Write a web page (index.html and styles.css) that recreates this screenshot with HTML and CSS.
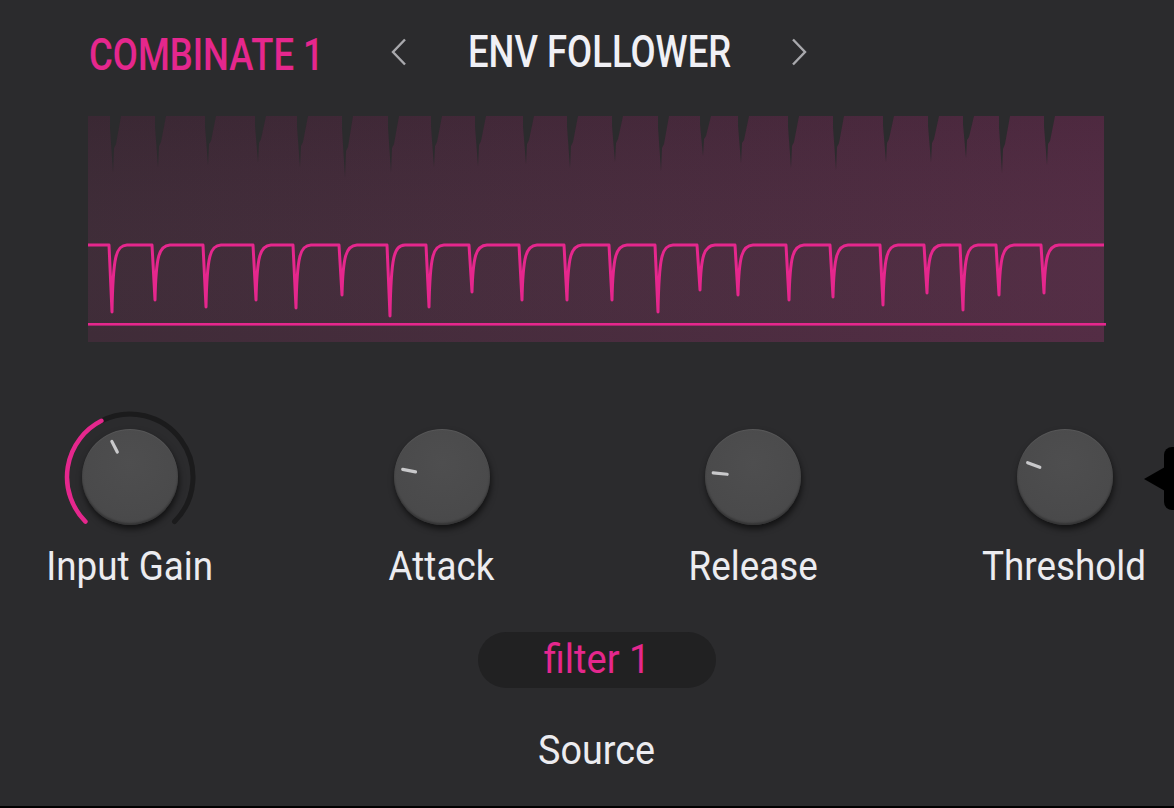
FILE: index.html
```html
<!DOCTYPE html>
<html lang="en">
<head>
<meta charset="utf-8">
<title>Env Follower</title>
<link rel="stylesheet" href="styles.css">
</head>
<body>
<div class="panel">
  <header class="header">
    <div class="title title-left"><span class="cond-l">COMBINATE 1</span></div>
    <svg class="chev chev-left" width="18" height="28" viewBox="0 0 18 28"><polyline points="15,1.5 3,14 15,26.5"/></svg>
    <div class="title title-main"><span class="cond-l">ENV FOLLOWER</span></div>
    <svg class="chev chev-right" width="18" height="28" viewBox="0 0 18 28"><polyline points="3,1.5 15,14 3,26.5"/></svg>
  </header>

  <svg class="display" width="1018" height="226" viewBox="0 0 1018 226">
    <defs>
      <linearGradient id="bg" x1="0" y1="0" x2="1" y2="0">
        <stop offset="0" stop-color="#3d2a36"/>
        <stop offset="1" stop-color="#522b43"/>
      </linearGradient>
      <linearGradient id="shade" x1="0" y1="0" x2="0" y2="1">
        <stop offset="0" stop-color="#000" stop-opacity="0.05"/>
        <stop offset="1" stop-color="#fff" stop-opacity="0.01"/>
      </linearGradient>
    </defs>
    <rect x="0" y="0" width="1016" height="226" fill="url(#bg)"/>
    <rect x="0" y="0" width="1016" height="226" fill="url(#shade)"/>
    <g fill="#2b2b2d">
      <polygon points="22,0 33,0 28,28 26,32 25,56 23.5,34 22,11"/>
      <polygon points="67,0 78,0 73,26 71,30 70,51 68.5,31 67,10"/>
      <polygon points="117,0 128,0 123,25 121,28 120,49 118.5,29 117,10"/>
      <polygon points="167,0 178,0 173,23 171,27 170,46 168.5,28 167,9"/>
      <polygon points="209,0 220,0 215,26 213,30 212,51 210.5,31 209,10"/>
      <polygon points="254,0 265,0 260,31 258,35 257,61 255.5,37 254,12"/>
      <polygon points="300,0 311,0 306,28 304,32 303,56 301.5,34 300,11"/>
      <polygon points="343,0 354,0 349,26 347,30 346,51 344.5,31 343,10"/>
      <polygon points="387,0 398,0 393,25 391,29 390,50 388.5,30 387,10"/>
      <polygon points="435,0 446,0 441,24 439,28 438,48 436.5,29 435,10"/>
      <polygon points="479,0 490,0 485,26 483,30 482,52 480.5,31 479,10"/>
      <polygon points="524,0 535,0 530,23 528,27 527,46 525.5,28 524,9"/>
      <polygon points="570,0 581,0 576,28 574,32 573,55 571.5,33 570,11"/>
      <polygon points="612,0 623,0 618,20 616,23 615,40 613.5,24 612,8"/>
      <polygon points="650,0 661,0 656,24 654,27 653,47 651.5,28 650,9"/>
      <polygon points="700,0 711,0 706,26 704,30 703,52 701.5,31 700,10"/>
      <polygon points="745,0 756,0 751,27 749,31 748,54 746.5,32 745,11"/>
      <polygon points="795,0 806,0 801,23 799,27 798,46 796.5,28 795,9"/>
      <polygon points="840,0 851,0 846,23 844,27 843,46 841.5,28 840,9"/>
      <polygon points="875,0 886,0 881,21 879,24 878,42 876.5,25 875,8"/>
      <polygon points="911,0 922,0 917,28 915,33 914,57 912.5,34 911,11"/>
      <polygon points="956,0 967,0 962,25 960,28 959,49 957.5,29 956,10"/>
    </g>
    <path class="env" d="M0,129 L21,129 L24,196 C25,140 28,129.5 39,129
      L64,129 L67,184 C68,140 71,129.5 82,129
      L115,129 L118,191 C119,140 122,129.5 133,129
      L165,129 L168,184 C169,140 172,129.5 183,129
      L205,129 L208,192 C209,140 212,129.5 223,129
      L251,129 L254,179 C255,140 258,129.5 269,129
      L299,129 L302,200 C303,140 306,129.5 317,129
      L338,129 L341,191 C342,140 345,129.5 356,129
      L381,129 L384,176 C385,140 388,129.5 399,129
      L431,129 L434,184 C435,140 438,129.5 449,129
      L476,129 L479,184 C480,140 483,129.5 494,129
      L521,129 L524,184 C525,140 528,129.5 539,129
      L567,129 L570,196 C571,140 574,129.5 585,129
      L609,129 L612,174 C613,140 616,129.5 627,129
      L647,129 L650,179 C651,140 654,129.5 665,129
      L698,129 L701,184 C702,140 705,129.5 716,129
      L742,129 L745,181 C746,140 749,129.5 760,129
      L792,129 L795,189 C796,140 799,129.5 810,129
      L836,129 L839,177 C840,140 843,129.5 854,129
      L872,129 L875,194 C876,140 879,129.5 890,129
      L908,129 L911,179 C912,140 915,129.5 926,129
      L953,129 L956,177 C957,140 960,129.5 971,129
      L1016,129"/>
    <rect x="0" y="207" width="1018" height="2.6" fill="#e5278d"/>
  </svg>

  <div class="knobs">
    <div class="ctrl">
      <div class="knob-wrap">
        <svg class="ring" width="136" height="136" viewBox="-68 -68 136 136">
          <path class="track" d="M-28.6,-56.13 A63,63 0 0 1 44.55,44.55"/>
          <path class="value" d="M-44.55,44.55 A63,63 0 0 1 -28.6,-56.13"/>
        </svg>
        <div class="knob"><svg width="96" height="96" viewBox="-48 -48 96 96"><line class="ind" x1="0" y1="-28" x2="0" y2="-40" transform="rotate(-27)"/></svg></div>
      </div>
      <div class="label"><span class="cond">Input Gain</span></div>
    </div>
    <div class="ctrl">
      <div class="knob-wrap">
        <div class="knob"><svg width="96" height="96" viewBox="-48 -48 96 96"><line class="ind" x1="0" y1="-27" x2="0" y2="-40" transform="rotate(-79)"/></svg></div>
      </div>
      <div class="label"><span class="cond">Attack</span></div>
    </div>
    <div class="ctrl">
      <div class="knob-wrap">
        <div class="knob"><svg width="96" height="96" viewBox="-48 -48 96 96"><line class="ind" x1="0" y1="-26" x2="0" y2="-40" transform="rotate(-84)"/></svg></div>
      </div>
      <div class="label"><span class="cond">Release</span></div>
    </div>
    <div class="ctrl">
      <div class="knob-wrap">
        <div class="knob"><svg width="96" height="96" viewBox="-48 -48 96 96"><line class="ind" x1="0" y1="-27" x2="0" y2="-40" transform="rotate(-69)"/></svg></div>
      </div>
      <div class="label"><span class="cond">Threshold</span></div>
    </div>
  </div>

  <div class="source">
    <div class="pill"><span class="cond">filter 1</span></div>
    <div class="label source-label"><span class="cond">Source</span></div>
  </div>

  <svg class="tip" width="30" height="66" viewBox="0 0 30 66">
    <rect x="20" y="1" width="20" height="63" rx="8"/>
    <polygon points="0,33 21,21 21,45"/>
  </svg>
</div>
</body>
</html>
```

FILE: styles.css
```css
html, body {
  margin: 0;
  padding: 0;
  background: #2b2b2d;
}

body {
  font-family: Roboto, "Liberation Sans", sans-serif;
  overflow: hidden;
}

.panel {
  position: relative;
  width: 1174px;
  height: 808px;
  box-sizing: border-box;
  border-bottom: 2px solid #000;
  background: #2b2b2d;
  overflow: hidden;
}

/* Header */
.header {
  display: flex;
  align-items: flex-start;
  height: 116px;
  box-sizing: border-box;
  padding: 29px 0 0 89px;
}

.title {
  font-size: 45px;
  line-height: 45px;
  font-weight: 500;
  white-space: nowrap;
}

.cond-l {
  display: inline-block;
  transform: scaleX(0.81);
  transform-origin: left center;
}

.title-left {
  width: 234px;
  margin-top: 3px;
  color: #e5278d;
}

.title-main {
  width: 262px;
  margin-left: 60px;
  color: #f0f0f5;
}

.chev {
  display: block;
  margin-top: 9px;
}

.chev polyline {
  fill: none;
  stroke: #a9a9ad;
  stroke-width: 2.4;
}

.chev-left {
  margin-left: 67px;
}

.chev-right {
  margin-left: 60px;
}

/* Display */
.display {
  display: block;
  margin-left: 88px;
}

.env {
  fill: none;
  stroke: #e5278d;
  stroke-width: 3;
  stroke-linejoin: round;
}

/* Knobs */
.knobs {
  display: flex;
  margin-top: 67px;
  padding-left: 30px;
  gap: 111.5px;
}

.ctrl {
  width: 200px;
  display: flex;
  flex-direction: column;
  align-items: center;
}

.knob-wrap {
  width: 136px;
  height: 136px;
  display: grid;
  place-items: center;
}

.knob-wrap > * {
  grid-area: 1 / 1;
}

.ring .track {
  fill: none;
  stroke: #1b1b1c;
  stroke-width: 5;
  stroke-linecap: round;
}

.ring .value {
  fill: none;
  stroke: #e5278d;
  stroke-width: 4.5;
  stroke-linecap: round;
}

.knob {
  width: 96px;
  height: 96px;
  border-radius: 50%;
  background: radial-gradient(circle at 50% 35%, #4e4e4f 0%, #4a4a4b 65%, #464647 100%);
  box-shadow: 1px 4px 6px rgba(0, 0, 0, 0.6), inset 0 -2px 2px rgba(0, 0, 0, 0.28), inset 0 1px 1px rgba(255, 255, 255, 0.07);
}

.knob svg {
  display: block;
}

.ind {
  stroke: #c9c9cb;
  stroke-width: 3.2;
  stroke-linecap: round;
}

.label {
  margin-top: 2px;
  font-size: 40px;
  line-height: 40px;
  color: #ececf0;
  text-align: center;
  white-space: nowrap;
}

.cond {
  display: inline-block;
  transform: scaleX(0.92);
  transform-origin: center;
}

/* Source */
.source {
  width: 238px;
  margin: 45px 0 0 478px;
  display: flex;
  flex-direction: column;
  align-items: center;
}

.pill {
  width: 238px;
  height: 56px;
  border-radius: 28px;
  background: #212122;
  display: flex;
  align-items: center;
  justify-content: center;
  font-size: 40px;
  line-height: 40px;
  color: #e5278d;
  white-space: nowrap;
}

.pill .cond {
  transform: scaleX(0.95);
}

.source-label {
  margin-top: 42px;
  font-size: 41px;
  line-height: 41px;
}

/* Overlay tooltip fragment at the right edge */
.tip {
  position: absolute;
  left: 1144px;
  top: 446px;
}

.tip rect,
.tip polygon {
  fill: #000;
}
```
